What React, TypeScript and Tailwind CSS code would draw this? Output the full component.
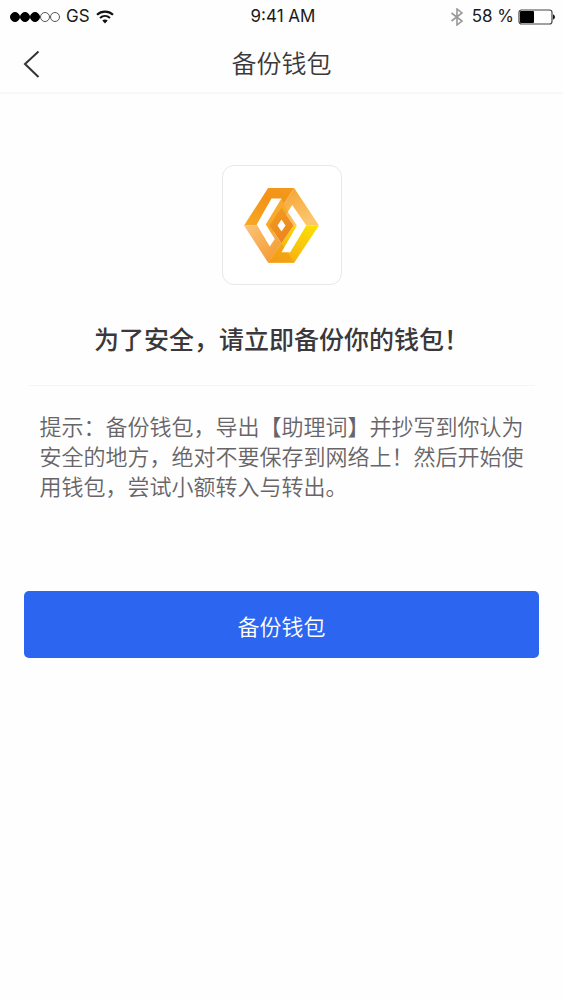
const tips =
  '提示：备份钱包，导出【助理词】并抄写到你认为安全的地方，绝对不要保存到网络上！然后开始使用钱包，尝试小额转入与转出。'

function WifiIcon() {
  return (
    <svg className="ml-1.5 h-[14px] w-[18px]" viewBox="0 0 18 14" fill="none" aria-hidden="true">
      <path d="M1 4.8C5.5 0.6 12.5 0.6 17 4.8" stroke="#111" strokeWidth="2.2" />
      <path d="M4 8C7 5.3 11 5.3 14 8" stroke="#111" strokeWidth="2.1" />
      <path d="M6.3 10.6C7.8 9.2 10.2 9.2 11.7 10.6L9 13.4Z" fill="#111" />
    </svg>
  )
}

function BluetoothIcon() {
  return (
    <svg className="mr-2 h-[18px] w-[14px]" viewBox="0 0 14 18" fill="none" aria-hidden="true">
      <path d="M1.5 5L12 13L7 17V1L12 5L1.5 13" stroke="#999" strokeWidth="1.6" />
    </svg>
  )
}

function BatteryIcon() {
  return (
    <svg className="ml-1 h-4 w-[38px]" viewBox="0 0 38 16" aria-hidden="true">
      <rect x="1" y="1" width="33" height="14" rx="2.5" fill="#fff" stroke="#444" strokeWidth="1.2" />
      <rect x="2" y="2" width="14" height="12" rx="1" fill="#000" />
      <path d="M35 5.5C37.6 6 37.6 10 35 10.5Z" fill="#111" />
    </svg>
  )
}

function Logo() {
  return (
    <svg className="size-[75px]" viewBox="90 83 224 224" role="img" aria-label="钱包">
      <defs>
        <linearGradient id="top" x1="0" y1="1" x2="1" y2="0">
          <stop offset="0" stopColor="#f9a925" />
          <stop offset="0.6" stopColor="#f39317" />
          <stop offset="1" stopColor="#f19a1c" />
        </linearGradient>
        <linearGradient id="right" x1="0" y1="0" x2="0.5" y2="1">
          <stop offset="0" stopColor="#f5a230" />
          <stop offset="1" stopColor="#fcc66c" />
        </linearGradient>
        <linearGradient id="bottom" x1="1" y1="0" x2="0" y2="1">
          <stop offset="0" stopColor="#fbe300" />
          <stop offset="0.5" stopColor="#f9c40f" />
          <stop offset="1" stopColor="#f4a012" />
        </linearGradient>
        <linearGradient id="left" x1="0" y1="0" x2="1" y2="1">
          <stop offset="0" stopColor="#fbc47c" />
          <stop offset="0.5" stopColor="#f7ad50" />
          <stop offset="1" stopColor="#f2962a" />
        </linearGradient>
        <linearGradient id="core" x1="0" y1="0" x2="0.4" y2="1">
          <stop offset="0" stopColor="#f29c22" />
          <stop offset="1" stopColor="#ec861c" />
        </linearGradient>
      </defs>
      <path d="M162 83H240L202 142L166 195H90Z" fill="url(#top)" />
      <path d="M240 83L314 195H238L202 142Z" fill="url(#right)" />
      <path d="M314 195L240 306H162L202 248L238 195Z" fill="url(#bottom)" />
      <path d="M90 195H166L202 248L162 306Z" fill="url(#left)" />
      <path d="M162 306L202 248L218 272L240 306Z" fill="#f29a16" opacity="0.6" />
      <path d="M202 114L221 155L202 178L166 232L155 192Z" fill="#f7aa2c" />
      <path d="M202 142L238 195L202 248L166 195Z" fill="url(#core)" />
      <path d="M172 114H202L155 192L182 235L167 258L128 192Z" fill="#fff" />
      <path d="M234 134L276 195L228 275H202L248 195L221 155Z" fill="#fff" />
      <path d="M202 177L214 195L202 213L190 195Z" fill="#fff" />
    </svg>
  )
}

function StatusBar() {
  return (
    <div className="grid h-8 grid-cols-3 items-center pt-px pr-[7px] pl-[10px] font-['Inter','Liberation_Sans',sans-serif] text-[17px] text-[#1a1a1a]">
      <div className="flex items-center">
        <div className="flex">
          {[true, true, true, false, false].map((on, i) => (
            <span
              key={i}
              className={`size-[10px] rounded-full border ${on ? 'border-black bg-black' : 'border-[#555]'}`}
            />
          ))}
        </div>
        <span className="ml-1.5">GS</span>
        <WifiIcon />
      </div>
      <div className="text-center">9:41 AM</div>
      <div className="flex items-center justify-end whitespace-nowrap">
        <BluetoothIcon />
        <span>58 %</span>
        <BatteryIcon />
      </div>
    </div>
  )
}

export default function App() {
  return (
    <div className="min-h-screen bg-[#fefefe] font-['Noto_Sans_CJK_SC',sans-serif] text-[#3b383b]">
      <StatusBar />

      <header className="grid h-[62px] grid-cols-[64px_1fr_64px] items-center border-b-2 border-[#f8f8f8]">
        <button type="button" aria-label="返回" className="flex h-full items-center pt-1 pl-[23px]">
          <svg className="h-7 w-[17px]" viewBox="0 0 17 28" fill="none" aria-hidden="true">
            <path d="M15.5 1.5L2 14L15.5 27" stroke="#333" strokeWidth="2" />
          </svg>
        </button>
        <h1 className="text-center text-[25px] leading-9 font-[350]">备份钱包</h1>
      </header>

      <main className="px-6 pt-[71px]">
        <div className="mx-auto flex size-[120px] items-center justify-center rounded-xl border border-[#e8e8e8] bg-white">
          <Logo />
        </div>

        <h2 className="mt-[35px] text-center text-[25px] leading-9 font-medium">
          为了安全，请立即备份你的钱包！
        </h2>

        <hr className="mx-1 mt-[29px] border-[#f5f5f5]" />

        <p className="mx-auto mt-6 max-w-[484px] text-[22px] leading-[30px] font-[350] text-[#676567]">
          {tips}
        </p>

        <button
          type="button"
          className="mt-[91px] h-[67px] w-full rounded-[5px] bg-[#2b65f0] pt-0.5 text-[22px] font-[350] text-white"
        >
          备份钱包
        </button>
      </main>
    </div>
  )
}
